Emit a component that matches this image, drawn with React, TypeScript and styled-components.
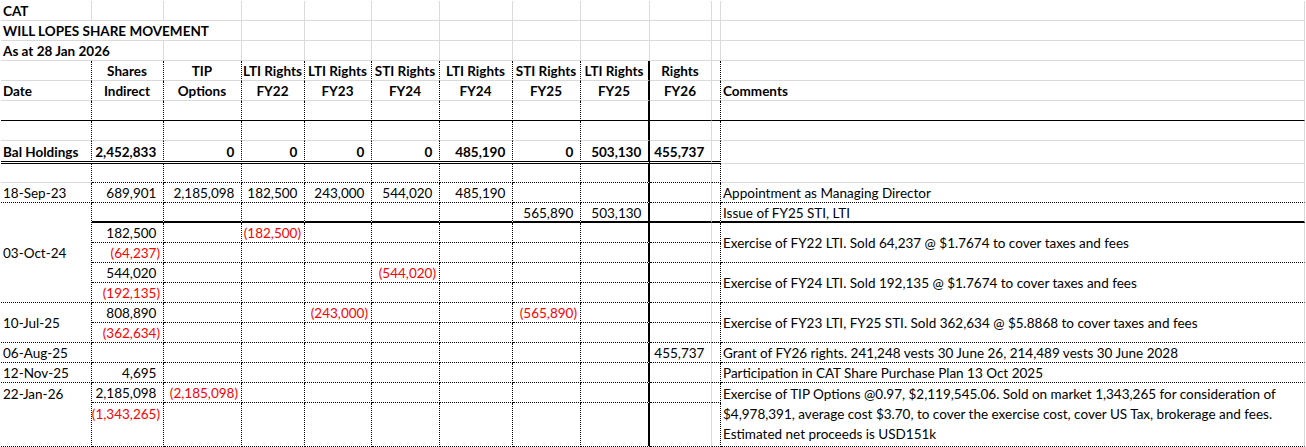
import React from 'react';
import styled, { createGlobalStyle } from 'styled-components';

type Line = 'none' | 'grid' | 'dot' | 'thin' | 'thick' | 'double';
type Align = 'left' | 'center' | 'right';

const COLS = [91, 72, 78, 63, 67, 68, 73, 68, 69, 62, 9, 584];
const ROWS = [20, 20, 20, 20, 20, 20, 20, 23, 19, 20, 20, 20, 20, 20, 20, 20, 20, 20, 20, 20, 44];

const GlobalStyle = createGlobalStyle`
  html, body { margin: 0; padding: 0; background: #fff; }
  body { font-family: Lato, "Liberation Sans", sans-serif; }
`;

const lineCss = (l: Line) => {
  switch (l) {
    case 'grid': return '1px solid #dadada';
    case 'dot': return '1px dotted #000';
    case 'thin': return '1px solid #000';
    case 'thick': return '2px solid #000';
    case 'double': return '3px double #000';
    default: return '0 none';
  }
};

const Sheet = styled.div`
  display: grid;
  grid-template-columns: ${COLS.map((w) => `${w}px`).join(' ')};
  grid-template-rows: ${ROWS.map((h) => `${h}px`).join(' ')};
  margin: 1px 0 0 1px;
  font-family: Lato, "Liberation Sans", sans-serif;
  font-size: 13.5px;
  color: #000;
`;

interface CellProps {
  $col: number;
  $row: number;
  $cspan: number;
  $rspan: number;
  $right: Line;
  $bottom: Line;
  $align: Align;
  $top: boolean;
  $bold: boolean;
  $red: boolean;
}

const Cell = styled.div<CellProps>`
  grid-column: ${(p) => p.$col + 1} / span ${(p) => p.$cspan};
  grid-row: ${(p) => p.$row + 1} / span ${(p) => p.$rspan};
  box-sizing: border-box;
  border-right: ${(p) => lineCss(p.$right)};
  border-bottom: ${(p) => lineCss(p.$bottom)};
  display: flex;
  flex-direction: column;
  justify-content: ${(p) => (p.$top ? 'flex-start' : 'center')};
  align-items: ${(p) => (p.$align === 'left' ? 'flex-start' : p.$align === 'right' ? 'flex-end' : 'center')};
  padding: 1px 3px 0 2px;
  line-height: 20px;
  white-space: nowrap;
  font-weight: ${(p) => (p.$bold ? 700 : 400)};
  color: ${(p) => (p.$red ? '#ff0000' : '#000')};
`;

const Paren = styled.span`
  visibility: hidden;
`;

function Amount({ value }: { value: string }) {
  const neg = value.startsWith('(');
  return (
    <span>
      {value}
      {!neg && <Paren>)</Paren>}
    </span>
  );
}

// border at the right of a column / bottom of a row
const vLine = (row: number, col: number): Line => {
  if (row < 3) return 'grid';
  if (col <= 7) return 'dot';
  if (col === 8) return 'thick';
  if (col === 10) return 'dot';
  return 'grid';
};

const hLine = (row: number, col: number): Line => {
  if (row <= 4 || row === 6) return 'grid';
  if (row === 5) return 'thin';
  if (row === 7) return col === 11 ? 'grid' : 'double';
  if (row === 8) return col === 0 || col === 11 ? 'grid' : 'dot';
  if (row === 10) return 'thick';
  return 'dot';
};

interface Spec {
  r: number;
  c: number;
  cs?: number;
  rs?: number;
  content?: React.ReactNode;
  align?: Align;
  bold?: boolean;
  red?: boolean;
  top?: boolean;
}

const heads1 = ['Shares', 'TIP', 'LTI Rights', 'LTI Rights', 'STI Rights', 'LTI Rights', 'STI Rights', 'LTI Rights', 'Rights'];
const heads2 = ['Indirect', 'Options', 'FY22', 'FY23', 'FY24', 'FY24', 'FY25', 'FY25', 'FY26'];
const balance = ['2,452,833', '0', '0', '0', '0', '485,190', '0', '503,130', '455,737'];

const amounts: [number, number, string][] = [
  [9, 1, '689,901'], [9, 2, '2,185,098'], [9, 3, '182,500'], [9, 4, '243,000'], [9, 5, '544,020'], [9, 6, '485,190'],
  [10, 7, '565,890'], [10, 8, '503,130'],
  [11, 1, '182,500'], [11, 3, '(182,500)'],
  [12, 1, '(64,237)'],
  [13, 1, '544,020'], [13, 5, '(544,020)'],
  [14, 1, '(192,135)'],
  [15, 1, '808,890'], [15, 4, '(243,000)'], [15, 7, '(565,890)'],
  [16, 1, '(362,634)'],
  [17, 9, '455,737'],
  [18, 1, '4,695'],
  [19, 1, '2,185,098'], [19, 2, '(2,185,098)'],
  [20, 1, '(1,343,265)'],
];

const specs: Spec[] = [
  { r: 0, c: 0, content: 'CAT', bold: true },
  { r: 1, c: 0, cs: 3, content: 'WILL LOPES SHARE MOVEMENT', bold: true },
  { r: 2, c: 0, cs: 2, content: 'As at 28 Jan 2026', bold: true },
  ...heads1.map((h, i) => ({ r: 3, c: i + 1, content: h, bold: true, align: 'center' as Align })),
  { r: 4, c: 0, content: 'Date', bold: true },
  ...heads2.map((h, i) => ({ r: 4, c: i + 1, content: h, bold: true, align: 'center' as Align })),
  { r: 4, c: 11, content: 'Comments', bold: true },
  { r: 7, c: 0, content: 'Bal Holdings', bold: true },
  ...balance.map((v, i) => ({ r: 7, c: i + 1, content: <Amount value={v} />, bold: true, align: 'right' as Align })),
  { r: 9, c: 0, content: '18-Sep-23' },
  { r: 9, c: 11, content: 'Appointment as Managing Director' },
  { r: 10, c: 0, rs: 5, content: '03-Oct-24' },
  { r: 10, c: 11, content: 'Issue of FY25 STI, LTI' },
  { r: 11, c: 11, rs: 2, content: 'Exercise of FY22 LTI. Sold 64,237 @ $1.7674 to cover taxes and fees' },
  { r: 13, c: 11, rs: 2, content: 'Exercise of FY24 LTI. Sold 192,135 @ $1.7674 to cover taxes and fees' },
  { r: 15, c: 0, rs: 2, content: '10-Jul-25' },
  { r: 15, c: 11, rs: 2, content: 'Exercise of FY23 LTI, FY25 STI. Sold 362,634 @ $5.8868 to cover taxes and fees' },
  { r: 17, c: 0, content: '06-Aug-25' },
  { r: 17, c: 11, content: 'Grant of FY26 rights. 241,248 vests 30 June 26, 214,489 vests 30 June 2028' },
  { r: 18, c: 0, content: '12-Nov-25' },
  { r: 18, c: 11, content: 'Participation in CAT Share Purchase Plan 13 Oct 2025' },
  { r: 19, c: 0, rs: 2, top: true, content: '22-Jan-26' },
  {
    r: 19,
    c: 11,
    rs: 2,
    top: true,
    content: (
      <>
        <span>Exercise of TIP Options @0.97, $2,119,545.06. Sold on market 1,343,265 for consideration of</span>
        <span>$4,978,391, average cost $3.70, to cover the exercise cost, cover US Tax, brokerage and fees.</span>
        <span>Estimated net proceeds is USD151k</span>
      </>
    ),
  },
  ...amounts.map(([r, c, v]) => ({
    r,
    c,
    content: <Amount value={v} />,
    align: 'right' as Align,
    red: v.startsWith('('),
    top: r === 20,
  })),
];

export default function App(): React.ReactElement {
  const covered = ROWS.map(() => COLS.map(() => false));
  const byPos = new Map<string, Spec>();
  specs.forEach((s) => {
    byPos.set(`${s.r}-${s.c}`, s);
    for (let r = s.r; r < s.r + (s.rs ?? 1); r++) {
      for (let c = s.c; c < s.c + (s.cs ?? 1); c++) {
        if (r !== s.r || c !== s.c) covered[r][c] = true;
      }
    }
  });

  const cells: React.ReactElement[] = [];
  ROWS.forEach((_, r) => {
    COLS.forEach((__, c) => {
      if (covered[r][c]) return;
      const s = byPos.get(`${r}-${c}`) ?? { r, c };
      const cs = s.cs ?? 1;
      const rs = s.rs ?? 1;
      cells.push(
        <Cell
          key={`${r}-${c}`}
          $col={c}
          $row={r}
          $cspan={cs}
          $rspan={rs}
          $right={vLine(r, c + cs - 1)}
          $bottom={hLine(r + rs - 1, c)}
          $align={s.align ?? 'left'}
          $top={!!s.top}
          $bold={!!s.bold}
          $red={!!s.red}
        >
          {s.content}
        </Cell>
      );
    });
  });

  return (
    <>
      <GlobalStyle />
      <Sheet>{cells}</Sheet>
    </>
  );
}
